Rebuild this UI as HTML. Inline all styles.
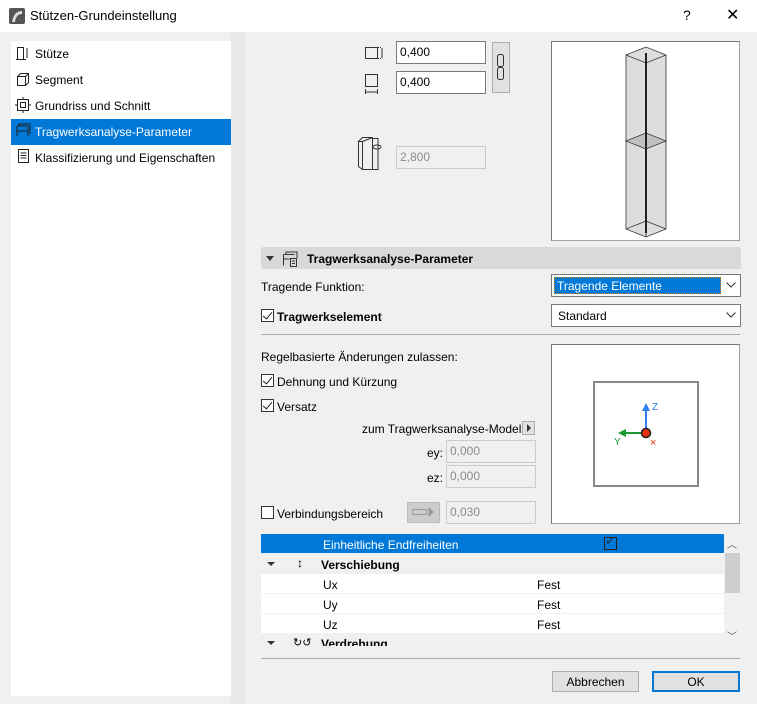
<!DOCTYPE html>
<html><head><meta charset="utf-8"><style>
*{margin:0;padding:0;box-sizing:border-box}
body{width:757px;height:704px;background:#f0f0f0;font-family:"Liberation Sans",sans-serif;font-size:12px;color:#000;position:relative;overflow:hidden}
.a{position:absolute}
.in{position:absolute;background:#fff;border:1px solid #7a7a7a;height:23px;padding:3px 0 0 3px;font-size:12px}
.dis{background:#f0f0f0;border:1px solid #ccc;color:#8a8a8a}
.cb{position:absolute;width:13px;height:13px;border:1px solid #333;background:#fff}
.cb.on::after{content:"";position:absolute;left:3px;top:0px;width:4px;height:8px;border:solid #222;border-width:0 1.3px 1.3px 0;transform:rotate(40deg)}
.t{position:absolute;white-space:nowrap}
.nav{position:absolute;left:11px;width:220px;height:26px;padding:6px 0 0 24px}
.row{position:absolute;left:261px;width:463px;height:20px;background:#fff;border-bottom:1px solid #f0f0f0}
</style></head><body>
<div class="a" style="left:0;top:0;width:757px;height:32px;background:#fff"></div>
<svg class="a" style="left:9px;top:8px" width="16" height="16"><rect width="16" height="16" rx="2" fill="#555"/><path d="M3 14 Q5 3 13 3 L13 6 Q7 6 6 14Z" fill="#ddd"/></svg>
<div class="t" style="left:30px;top:8px;font-size:13px">Stützen-Grundeinstellung</div>
<div class="t" style="left:683px;top:7px;font-size:14px">?</div>
<div class="t" style="left:726px;top:5px;font-size:16px">✕</div>

<div class="a" style="left:11px;top:41px;width:220px;height:655px;background:#fff"></div>
<div class="a" style="left:231px;top:32px;width:14px;height:672px;background:#e9e9e9"></div>
<div class="nav" style="top:41px">Stütze</div>
<div class="nav" style="top:67px">Segment</div>
<div class="nav" style="top:93px">Grundriss und Schnitt</div>
<div class="nav" style="top:119px;background:#0078d7;color:#fff">Tragwerksanalyse-Parameter</div>
<div class="nav" style="top:145px">Klassifizierung und Eigenschaften</div>
<svg class="a" style="left:15px;top:45px" width="16" height="120" fill="none" stroke="#222" stroke-width="1">
<rect x="2.5" y="2.5" width="6" height="12"/><path d="M1 14.5h10M12 3v10"/>
<path d="M2.5 31.5l3-3h8v9l-3 3M2.5 31.5h8v9h-8z M10.5 31.5l3-3"/>
<rect x="2.5" y="54.5" width="11" height="11"/><rect x="5.5" y="57.5" width="5" height="5"/><path d="M8 52v2M8 66v2M0 60h2M14 60h2"/>
<path d="M2 81h11M2 81v10M13 81v10M4 81v-2h11v10M2 86h11"/>
<rect x="3.5" y="104.5" width="10" height="13"/><path d="M5.5 108h6M5.5 110.5h6M5.5 113h6"/>
</svg>

<svg class="a" style="left:364px;top:44px" width="26" height="50" fill="none" stroke="#333">
<rect x="1.5" y="3.5" width="12" height="11"/><path d="M14 3.5h4M14 14.5h4M18 4v10" stroke-dasharray="1 1"/><path d="M18 4v10"/>
<rect x="1.5" y="30.5" width="12" height="12"/><path d="M1.5 48h12M1.5 45v5M13.5 45v5"/>
</svg>
<div class="in" style="left:396px;top:41px;width:90px">0,400</div>
<div class="in" style="left:396px;top:71px;width:90px">0,400</div>
<div class="a" style="left:492px;top:42px;width:18px;height:51px;background:#e1e1e1;border:1px solid #adadad"></div>
<svg class="a" style="left:496px;top:53px" width="10" height="30" fill="none" stroke="#333"><rect x="1.5" y="1.5" width="6" height="12" rx="2"/><rect x="1.5" y="14.5" width="6" height="12" rx="2"/></svg>
<svg class="a" style="left:357px;top:135px" width="32" height="36" fill="none" stroke="#333"><path d="M1.5 6.5l4-4h10v32h-10v-28zM1.5 6.5v25l4 3M5.5 6.5l10-4M15.5 3.5h6M15.5 34.5h6M21 4v30"/><ellipse cx="20" cy="12" rx="4" ry="2"/></svg>
<div class="in dis" style="left:396px;top:146px;width:90px">2,800</div>

<div class="a" style="left:551px;top:41px;width:189px;height:200px;background:#fff;border:1px solid #a0a0a0;border-left-color:#777;border-top-color:#777"></div>
<svg class="a" style="left:551px;top:41px" width="189" height="200" stroke="#333" stroke-width="0.8">
<path d="M75 14L95 6l20 8v174l-20 8-20-8z" fill="#dcdede"/>
<path d="M75 14l20 8 20-8M95 22v174M75 188l20-8 20 8" fill="none"/>
<path d="M75 100l20-8 20 8-20 8z" fill="#bfc1c3"/>
<path d="M95 12v180" stroke-width="2" stroke="#222"/>
</svg>

<div class="a" style="left:261px;top:247px;width:480px;height:22px;background:#d9d9d9;border-radius:2px"></div>
<div class="a" style="left:266px;top:256px;border:4px solid transparent;border-top:5px solid #333"></div>
<svg class="a" style="left:282px;top:250px" width="18" height="18" fill="none" stroke="#333"><path d="M1.5 4.5h11M1.5 4.5v11M4 4.5V2h11v6M1.5 9h6"/><rect x="8.5" y="8.5" width="6" height="8"/><path d="M10 11h3M10 13.5h3"/></svg>
<div class="t" style="left:307px;top:252px;font-weight:bold">Tragwerksanalyse-Parameter</div>

<div class="t" style="left:261px;top:280px">Tragende Funktion:</div>
<div class="a" style="left:551px;top:274px;width:190px;height:23px;background:#fff;border:1px solid #7a7a7a"></div>
<div class="a" style="left:554px;top:277px;width:167px;height:17px;background:#0078d7;color:#fff;border:1px dotted #e08000;padding:1px 0 0 2px">Tragende Elemente</div>
<svg class="a" style="left:726px;top:282px" width="10" height="6" fill="none" stroke="#333"><path d="M0.5 0.5l4.5 4.5 4.5-4.5"/></svg>
<div class="cb on" style="left:261px;top:309px"></div>
<div class="t" style="left:277px;top:310px;font-weight:bold">Tragwerkselement</div>
<div class="a" style="left:551px;top:304px;width:190px;height:23px;background:#fff;border:1px solid #7a7a7a;padding:4px 0 0 6px">Standard</div>
<svg class="a" style="left:726px;top:312px" width="10" height="6" fill="none" stroke="#333"><path d="M0.5 0.5l4.5 4.5 4.5-4.5"/></svg>
<div class="a" style="left:261px;top:334px;width:479px;height:1px;background:#aaa"></div>

<div class="t" style="left:261px;top:350px">Regelbasierte Änderungen zulassen:</div>
<div class="cb on" style="left:261px;top:374px"></div>
<div class="t" style="left:277px;top:375px">Dehnung und Kürzung</div>
<div class="cb on" style="left:261px;top:399px"></div>
<div class="t" style="left:277px;top:400px">Versatz</div>
<div class="t" style="left:362px;top:422px">zum Tragwerksanalyse-Modell</div>
<div class="a" style="left:522px;top:421px;width:13px;height:14px;background:#e1e1e1;border:1px solid #adadad"></div>
<div class="a" style="left:527px;top:424px;border:4px solid transparent;border-left:4px solid #333;border-right:0"></div>
<div class="t" style="left:427px;top:446px">ey:</div>
<div class="in dis" style="left:446px;top:440px;width:90px">0,000</div>
<div class="t" style="left:427px;top:471px">ez:</div>
<div class="in dis" style="left:446px;top:465px;width:90px">0,000</div>
<div class="cb" style="left:261px;top:506px"></div>
<div class="t" style="left:277px;top:507px">Verbindungsbereich</div>
<div class="a" style="left:407px;top:502px;width:33px;height:21px;background:#ccc;border:1px solid #bbb"></div>
<svg class="a" style="left:412px;top:507px" width="24" height="10" fill="none" stroke="#999"><rect x="0.5" y="2.5" width="14" height="5"/><path d="M17 1v8l4-4z" fill="#999"/></svg>
<div class="in dis" style="left:446px;top:501px;width:90px">0,030</div>

<div class="a" style="left:551px;top:344px;width:189px;height:180px;background:#fff;border:1px solid #a0a0a0;border-left-color:#777;border-top-color:#777"></div>
<div class="a" style="left:593px;top:381px;width:106px;height:106px;border:2px solid #888"></div>
<svg class="a" style="left:610px;top:398px" width="55" height="50"><path d="M36 35V11" stroke="#2f80ed" stroke-width="2"/><path d="M32 13l4-8 4 8z" fill="#2f80ed"/><path d="M34 35H14" stroke="#1a9a30" stroke-width="2"/><path d="M16 31l-8 4 8 4z" fill="#1a9a30"/><circle cx="36" cy="35" r="4.5" fill="#e83010" stroke="#222" stroke-width="1.5"/><text x="42" y="12" font-size="10" fill="#2f80ed" font-family="Liberation Sans">Z</text><text x="4" y="47" font-size="10" fill="#1a9a30" font-family="Liberation Sans">Y</text><text x="40" y="48" font-size="11" fill="#e83010" font-family="Liberation Sans">×</text></svg>

<div class="a" style="left:261px;top:534px;width:463px;height:19px;background:#0078d7"></div>
<div class="t" style="left:323px;top:538px;color:#fff">Einheitliche Endfreiheiten</div>
<div class="a" style="left:604px;top:537px;width:13px;height:13px;border:1px solid #222"></div>
<div class="t" style="left:605px;top:534px;font-size:12px;color:#222">✓</div>
<div class="a" style="left:261px;top:553px;width:463px;height:21px;background:#f0f0f0"></div>
<div class="a" style="left:267px;top:562px;border:4px solid transparent;border-top:4px solid #333"></div>
<div class="t" style="left:297px;top:556px">↕</div>
<div class="t" style="left:321px;top:558px;font-weight:bold">Verschiebung</div>
<div class="row" style="top:574px"><span class="t" style="left:62px;top:4px">Ux</span><span class="t" style="left:276px;top:4px">Fest</span></div>
<div class="row" style="top:594px"><span class="t" style="left:62px;top:4px">Uy</span><span class="t" style="left:276px;top:4px">Fest</span></div>
<div class="row" style="top:614px"><span class="t" style="left:62px;top:4px">Uz</span><span class="t" style="left:276px;top:4px">Fest</span></div>
<div class="a" style="left:261px;top:634px;width:463px;height:12px;overflow:hidden"><div class="a" style="left:6px;top:7px;border:4px solid transparent;border-top:4px solid #333"></div><span class="t" style="left:32px;top:2px;font-size:11px">↻↺</span><span class="t" style="left:60px;top:3px;font-weight:bold">Verdrehung</span></div>
<div class="a" style="left:725px;top:553px;width:15px;height:40px;background:#cdcdcd"></div>
<div class="t" style="left:727px;top:536px;font-size:10px;color:#555">︿</div>
<div class="t" style="left:727px;top:628px;font-size:10px;color:#555">﹀</div>

<div class="a" style="left:261px;top:658px;width:479px;height:1px;background:#aaa"></div>
<div class="a" style="left:552px;top:671px;width:87px;height:21px;background:#e1e1e1;border:1px solid #adadad;text-align:center;padding-top:3px">Abbrechen</div>
<div class="a" style="left:652px;top:671px;width:88px;height:21px;background:#e1e1e1;border:2px solid #0078d7;text-align:center;padding-top:2px">OK</div>
</body></html>
